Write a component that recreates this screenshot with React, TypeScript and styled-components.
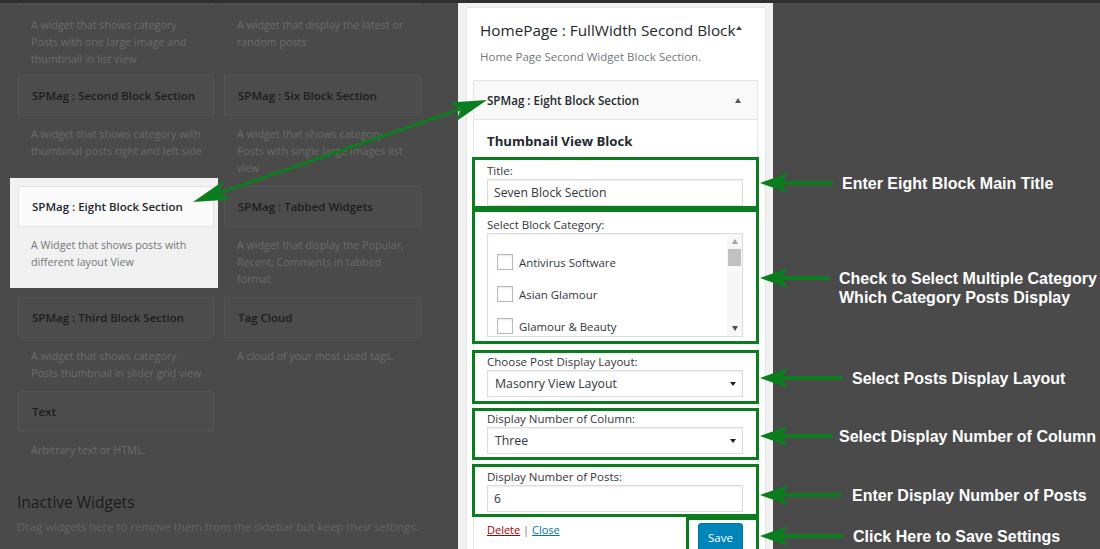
import React from "react";
import styled, { createGlobalStyle } from "styled-components";

const GREEN = "#0b7d1e";

const GlobalStyle = createGlobalStyle`
  html, body {
    margin: 0;
    padding: 0;
    background: #4a4a4a;
  }
  body {
    font-family: "Open Sans", "Noto Sans", sans-serif;
  }
`;

const Page = styled.div`
  position: relative;
  width: 1100px;
  height: 549px;
  overflow: hidden;
  background: #4a4a4a;
  display: flex;
  flex-direction: column;
`;

const TopBar = styled.div`
  height: 3px;
  flex-shrink: 0;
  background: #2f2f2f;
`;

const Main = styled.div`
  display: flex;
  flex: 1;
  min-height: 0;
`;

/* ---------- available widgets (dimmed) ---------- */

const Available = styled.div`
  width: 458px;
  flex-shrink: 0;
  overflow: hidden;
  padding-left: 18px;
  box-sizing: border-box;
`;

const WidgetGrid = styled.div`
  display: grid;
  grid-template-columns: 196px 197px;
  column-gap: 10px;
  align-items: start;
  margin-top: -39px;
`;

const WidgetCell = styled.div<{ $active?: boolean }>`
  ${(p) =>
    p.$active &&
    `
    background: #f1f1f1;
    margin: -8px -4px 0 -8px;
    padding: 8px 4px 0 8px;
  `}
`;

const Card = styled.div<{ $active?: boolean }>`
  height: 41px;
  box-sizing: border-box;
  display: flex;
  align-items: center;
  padding: 0 13px;
  border: 1px solid ${(p) => (p.$active ? "#e3e3e3" : "#525252")};
  background: ${(p) => (p.$active ? "#fafafa" : "#4c4c4c")};
  color: ${(p) => (p.$active ? "#23282d" : "#1d1d1d")};
  font-size: 11.5px;
  font-weight: 600;
  white-space: nowrap;
`;

const Desc = styled.div<{ $active?: boolean; $first?: boolean }>`
  padding: ${(p) => (p.$first ? "12px" : "10px")} 13px ${(p) => (p.$active ? "17px" : p.$first ? "7px" : "9px")};
  font-size: 10.7px;
  line-height: 17px;
  color: ${(p) => (p.$active ? "#72777c" : "#6a6a6a")};

  span {
    display: block;
    white-space: nowrap;
  }
`;

const InactiveTitle = styled.h2`
  margin: 22px 0 0 -1px;
  font-size: 15.5px;
  line-height: 24px;
  font-weight: 400;
  color: #1c1c1c;
`;

const InactiveText = styled.p`
  margin: 4px 0 0 -1px;
  font-size: 11.4px;
  line-height: 17px;
  color: #656565;
  white-space: nowrap;
`;

/* ---------- sidebar panel ---------- */

const SidebarArea = styled.div`
  width: 315px;
  flex-shrink: 0;
  background: #f1f1f1;
  padding: 4px 7px 0 8px;
  box-sizing: border-box;
`;

const SidebarBox = styled.div`
  height: 100%;
  box-sizing: border-box;
  background: #fff;
  border: 1px solid #e5e5e5;
  border-bottom: none;
  padding: 0 7px 0 6px;
`;

const SidebarHeading = styled.h2`
  margin: 0;
  padding: 11px 0 0 7px;
  font-size: 15.3px;
  line-height: 22px;
  font-weight: 400;
  color: #23282d;
  white-space: nowrap;
`;

const Caret = styled.span<{ $color?: string }>`
  display: inline-block;
  width: 0;
  height: 0;
  border-left: 3.5px solid transparent;
  border-right: 3.5px solid transparent;
  border-bottom: 5px solid ${(p) => p.$color || "#555"};
`;

const HeadingCaret = styled(Caret)`
  vertical-align: top;
  margin: 7px 0 0 1px;
  border-left-width: 3px;
  border-right-width: 3px;
  border-bottom-width: 4px;
`;

const SidebarDesc = styled.p`
  margin: 7px 0 0 7px;
  font-size: 11.5px;
  line-height: 17px;
  color: #72777c;
  white-space: nowrap;
`;

const WidgetBox = styled.div`
  margin-top: 15px;
  border: 1px solid #e5e5e5;
  border-bottom: none;
  background: #fff;
`;

const WidgetHeader = styled.div`
  height: 39px;
  box-sizing: border-box;
  display: flex;
  align-items: center;
  justify-content: space-between;
  padding: 0 16px 0 13px;
  background: #f9f9f9;
  border-bottom: 1px solid #e5e5e5;
  font-size: 11.6px;
  font-weight: 600;
  color: #23282d;
`;

const WidgetInside = styled.div`
  display: flex;
  flex-direction: column;
`;

const SectionTitle = styled.h4`
  margin: 11px 0 0 13px;
  font-size: 13.2px;
  line-height: 20px;
  font-weight: 700;
  color: #23282d;
`;

const FieldBox = styled.div<{ $top: number; $padTop: number; $padBottom: number }>`
  margin: ${(p) => p.$top}px -2px 0 -2px;
  border: 3px solid ${GREEN};
  padding: ${(p) => p.$padTop}px 13px ${(p) => p.$padBottom}px 12px;
`;

const Label = styled.div`
  font-size: 11.5px;
  line-height: 16px;
  color: #32373c;
  white-space: nowrap;
`;

const TextInput = styled.div`
  height: 27px;
  box-sizing: border-box;
  display: flex;
  align-items: center;
  padding: 0 6px;
  border: 1px solid #dcdcdc;
  box-shadow: inset 0 1px 2px rgba(0, 0, 0, 0.07);
  background: #fff;
  font-size: 12.2px;
  color: #32373c;
`;

const SelectBox = styled(TextInput)`
  justify-content: space-between;
  padding: 0 6px 0 7px;
  font-size: 12.3px;
`;

const DownArrow = styled.span<{ $color?: string; $size?: number }>`
  width: 0;
  height: 0;
  border-left: ${(p) => (p.$size || 7) / 2}px solid transparent;
  border-right: ${(p) => (p.$size || 7) / 2}px solid transparent;
  border-top: ${(p) => ((p.$size || 7) * 5) / 7}px solid ${(p) => p.$color || "#1e1e1e"};
`;

const ListBox = styled.div`
  height: 104px;
  box-sizing: border-box;
  display: flex;
  border: 1px solid #dcdcdc;
  box-shadow: inset 0 1px 2px rgba(0, 0, 0, 0.07);
  overflow: hidden;
`;

const ListItems = styled.div`
  flex: 1;
  padding-top: 12px;
`;

const ListItem = styled.div`
  height: 32px;
  display: flex;
  align-items: center;
  gap: 6px;
  padding-left: 9px;
  font-size: 11.4px;
  color: #32373c;
`;

const CheckBox = styled.span`
  width: 16px;
  height: 16px;
  box-sizing: border-box;
  border: 1px solid #b4b9be;
  background: #fff;
  box-shadow: inset 0 1px 2px rgba(0, 0, 0, 0.1);
`;

const ScrollBar = styled.div`
  width: 15px;
  display: flex;
  flex-direction: column;
  background: #f7f7f7;
`;

const ScrollButton = styled.div`
  height: 15px;
  display: flex;
  align-items: center;
  justify-content: center;
`;

const ScrollThumb = styled.div`
  height: 17px;
  margin: 0 1px;
  background: #c1c1c1;
`;

const ScrollTrack = styled.div`
  flex: 1;
`;

const Footer = styled.div`
  display: flex;
  justify-content: space-between;
  align-items: flex-start;
`;

const Links = styled.div`
  padding: 5px 0 0 13px;
  font-size: 11px;
  line-height: 16px;
  color: #72777c;
`;

const LinkText = styled.a<{ $danger?: boolean }>`
  color: ${(p) => (p.$danger ? "#a00" : "#0073aa")};
  text-decoration: underline;
`;

const SaveBox = styled.div`
  margin-right: -2px;
  border: 3px solid ${GREEN};
  border-bottom: none;
  padding: 3px 13px 0 9px;
`;

const SaveButton = styled.button`
  width: 45px;
  height: 28px;
  border: 1px solid #0073aa;
  border-radius: 3px;
  background: #0085ba;
  box-shadow: 0 1px 0 #006799;
  color: #fff;
  font-family: "Open Sans", "Noto Sans", sans-serif;
  font-size: 11.5px;
  padding: 0;
`;

/* ---------- annotations ---------- */

const Notes = styled.div`
  position: relative;
  z-index: 2;
  flex: 1;
  margin-left: -13px;
  display: flex;
  flex-direction: column;
`;

const Note = styled.div<{ $top: number; $gap: number }>`
  display: flex;
  align-items: flex-start;
  margin-top: ${(p) => p.$top}px;
  gap: ${(p) => p.$gap}px;
`;

const NoteText = styled.div`
  font-family: "Liberation Sans", Arial, sans-serif;
  font-weight: 700;
  font-size: 16px;
  line-height: 19px;
  padding-top: 1px;
  color: #fff;
  white-space: nowrap;
`;

const Overlay = styled.svg`
  position: absolute;
  left: 0;
  top: 0;
  pointer-events: none;
  z-index: 3;
`;

function LeftArrow({ length }: { length: number }) {
  return (
    <svg width={length} height={20} viewBox={`0 0 ${length} 20`}>
      <path d={`M0 10 L28 0 L23 8 L${length} 8 L${length} 12 L23 12 L28 20 Z`} fill={GREEN} />
    </svg>
  );
}

type Widget = { title: string; desc: string[]; active?: boolean; first?: boolean };

const widgets: Widget[] = [
  { title: "", first: true, desc: ["A widget that shows category", "Posts with one large image and", "thumbnail in list view"] },
  { title: "", first: true, desc: ["A widget that display the latest or", "random posts"] },
  { title: "SPMag : Second Block Section", desc: ["A widget that shows category with", "thumbinal posts right and left side"] },
  { title: "SPMag : Six Block Section", desc: ["A widget that shows category", "Posts with single large images list", "view"] },
  { title: "SPMag : Eight Block Section", desc: ["A Widget that shows posts with", "different layout View"], active: true },
  { title: "SPMag : Tabbed Widgets", desc: ["A widget that display the Popular,", "Recent, Comments in tabbed", "format"] },
  { title: "SPMag : Third Block Section", desc: ["A widget that shows category", "Posts thumbnail in slider grid view"] },
  { title: "Tag Cloud", desc: ["A cloud of your most used tags."] },
  { title: "Text", desc: ["Arbitrary text or HTML."] },
];

const notes = [
  { top: 170, gap: 9, length: 73, lines: ["Enter Eight Block Main Title"] },
  { top: 75, gap: 9, length: 70, lines: ["Check to Select Multiple Category", "Which Category Posts Display"] },
  { top: 61, gap: 9, length: 83, lines: ["Select Posts Display Layout"] },
  { top: 38, gap: 6, length: 73, lines: ["Select Display Number of Column"] },
  { top: 39, gap: 11, length: 81, lines: ["Enter Display Number of Posts"] },
  { top: 21, gap: 10, length: 83, lines: ["Click Here to Save Settings"] },
];

const categories = ["Antivirus Software", "Asian Glamour", "Glamour & Beauty"];

export default function App() {
  return (
    <Page>
      <GlobalStyle />
      <TopBar />
      <Main>
        <Available>
          <WidgetGrid>
            {widgets.map((w, i) => (
              <WidgetCell key={i} $active={w.active}>
                <Card $active={w.active}>{w.title}</Card>
                <Desc $active={w.active} $first={w.first}>
                  {w.desc.map((line) => (
                    <span key={line}>{line}</span>
                  ))}
                </Desc>
              </WidgetCell>
            ))}
          </WidgetGrid>
          <InactiveTitle>Inactive Widgets</InactiveTitle>
          <InactiveText>Drag widgets here to remove them from the sidebar but keep their settings.</InactiveText>
        </Available>

        <SidebarArea>
          <SidebarBox>
            <SidebarHeading>
              HomePage : FullWidth Second Block
              <HeadingCaret $color="#444" />
            </SidebarHeading>
            <SidebarDesc>Home Page Second Widget Block Section.</SidebarDesc>

            <WidgetBox>
              <WidgetHeader>
                <span>SPMag : Eight Block Section</span>
                <Caret $color="#555" />
              </WidgetHeader>
              <WidgetInside>
                <SectionTitle>Thumbnail View Block</SectionTitle>

                <FieldBox $top={6} $padTop={3} $padBottom={0}>
                  <Label>Title:</Label>
                  <TextInput>Seven Block Section</TextInput>
                </FieldBox>

                <FieldBox $top={0} $padTop={5} $padBottom={4}>
                  <Label>Select Block Category:</Label>
                  <ListBox>
                    <ListItems>
                      {categories.map((c) => (
                        <ListItem key={c}>
                          <CheckBox />
                          {c}
                        </ListItem>
                      ))}
                    </ListItems>
                    <ScrollBar>
                      <ScrollButton>
                        <Caret $color="#a3a3a3" />
                      </ScrollButton>
                      <ScrollThumb />
                      <ScrollTrack />
                      <ScrollButton>
                        <DownArrow $color="#505050" />
                      </ScrollButton>
                    </ScrollBar>
                  </ListBox>
                </FieldBox>

                <FieldBox $top={6} $padTop={1} $padBottom={4}>
                  <Label>Choose Post Display Layout:</Label>
                  <SelectBox>
                    Masonry View Layout
                    <DownArrow $size={6} />
                  </SelectBox>
                </FieldBox>

                <FieldBox $top={4} $padTop={0} $padBottom={3}>
                  <Label>Display Number of Column:</Label>
                  <SelectBox>
                    Three
                    <DownArrow $size={6} />
                  </SelectBox>
                </FieldBox>

                <FieldBox $top={4} $padTop={2} $padBottom={2}>
                  <Label>Display Number of Posts:</Label>
                  <TextInput>6</TextInput>
                </FieldBox>

                <Footer>
                  <Links>
                    <LinkText $danger>Delete</LinkText> | <LinkText>Close</LinkText>
                  </Links>
                  <SaveBox>
                    <SaveButton>Save</SaveButton>
                  </SaveBox>
                </Footer>
              </WidgetInside>
            </WidgetBox>
          </SidebarBox>
        </SidebarArea>

        <Notes>
          {notes.map((n) => (
            <Note key={n.lines[0]} $top={n.top} $gap={n.gap}>
              <LeftArrow length={n.length} />
              <NoteText>
                {n.lines.map((l) => (
                  <div key={l}>{l}</div>
                ))}
              </NoteText>
            </Note>
          ))}
        </Notes>
      </Main>

      <Overlay width={1100} height={549} viewBox="0 0 1100 549">
        <line x1={219.5} y1={192.8} x2={460.5} y2={109.2} stroke={GREEN} strokeWidth={3} />
        <path d="M193 202 L223.7 180.8 L219.5 192.8 L230.3 199.6 Z" fill={GREEN} />
        <path d="M487 100 L456.3 121.2 L460.5 109.2 L449.7 102.4 Z" fill={GREEN} />
      </Overlay>
    </Page>
  );
}
